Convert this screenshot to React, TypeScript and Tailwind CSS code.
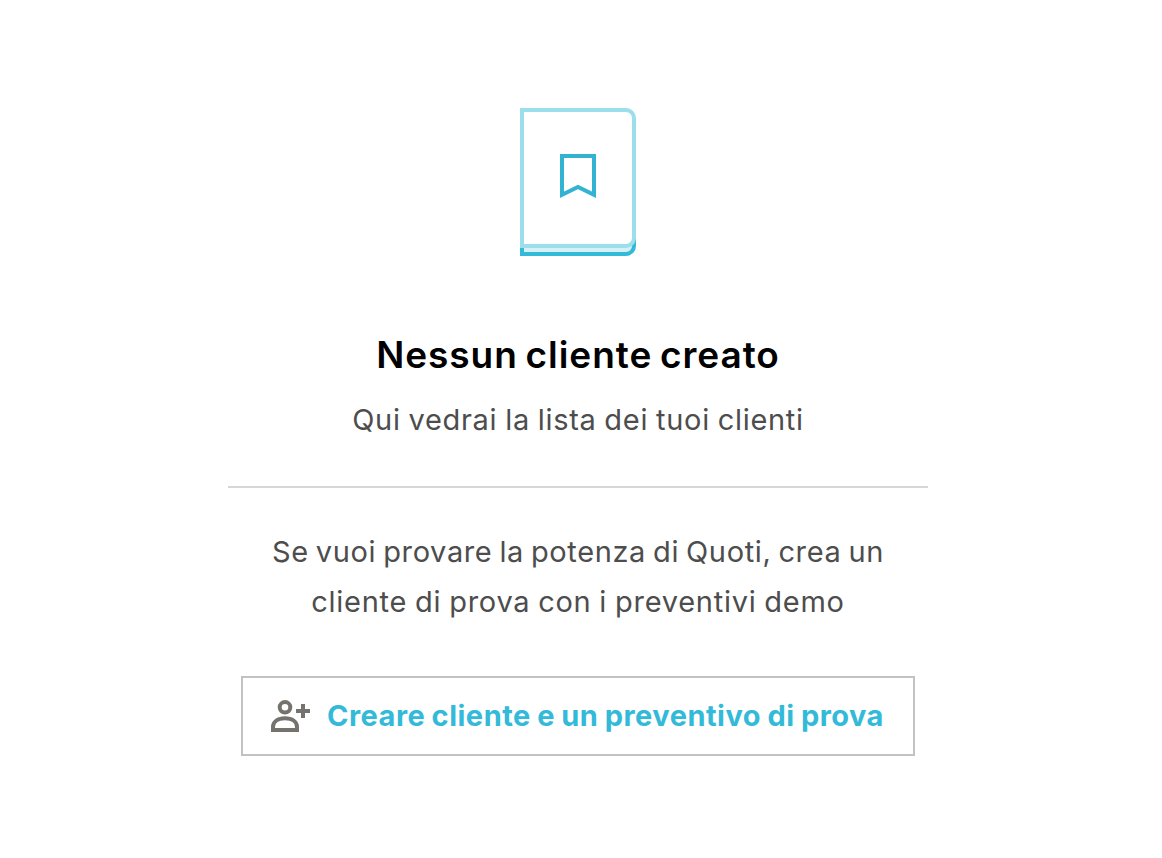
import React from 'react'

const BookIcon: React.FC = () => (
  <svg width="116" height="148" viewBox="0 0 116 148" fill="none">
    <path d="M2 124H114V138a8 8 0 0 1-8 8H2z" fill="#D5F1F5" stroke="#34BAD9" strokeWidth="4" />
    <path d="M2 2H106a8 8 0 0 1 8 8V130a8 8 0 0 1-8 8H2z" fill="#fff" stroke="#9ADFEB" strokeWidth="4" />
    <path d="M42 48H74V86.7L58 79 42 86.7z" stroke="#32B3D2" strokeWidth="4" />
  </svg>
)

const AddPersonIcon: React.FC = () => (
  <svg width="40" height="32" viewBox="0 0 40 32" fill="none" stroke="#76726D" strokeWidth="4">
    <circle cx="14" cy="7.3" r="5.3" />
    <path d="M2 30V27c0-5.5 5-8.8 12-8.8s12 3.3 12 8.8v3z" />
    <path d="M32 4v14M25 11h14" />
  </svg>
)

const App: React.FC = () => {
  return (
    <main className="flex h-[858px] w-[1156px] flex-col items-center bg-white pt-[108px] font-['Inter',sans-serif] text-[29px] text-[#4d4d4d]">
      <BookIcon />
      <h1 className="mt-[75px] text-[37px] leading-[48px] font-semibold tracking-[0.95px] [word-spacing:-2.5px] whitespace-nowrap text-black">
        Nessun cliente creato
      </h1>
      <p className="mt-4 leading-[50px] tracking-[0.7px] [word-spacing:-1px] whitespace-nowrap">
        Qui vedrai la lista dei tuoi clienti
      </p>
      <hr className="mt-[41px] w-[700px] border-t-2 border-[#d6d6d6]" />
      <div className="mt-[39px] text-center leading-[50px] whitespace-nowrap">
        <p className="tracking-[0.63px] [word-spacing:-1.8px]">Se vuoi provare la potenza di Quoti, crea un</p>
        <p className="tracking-[0.73px] [word-spacing:-1px]">cliente di prova con i preventivi demo</p>
      </div>
      <button className="mt-[49px] flex h-20 w-[674px] items-center border-2 border-[#c2c2c2] pl-7 font-bold text-[#34bad9]">
        <AddPersonIcon />
        <span className="ml-4 tracking-[0.49px] [word-spacing:-1px] whitespace-nowrap">Creare cliente e un preventivo di prova</span>
      </button>
    </main>
  )
}

export default App
